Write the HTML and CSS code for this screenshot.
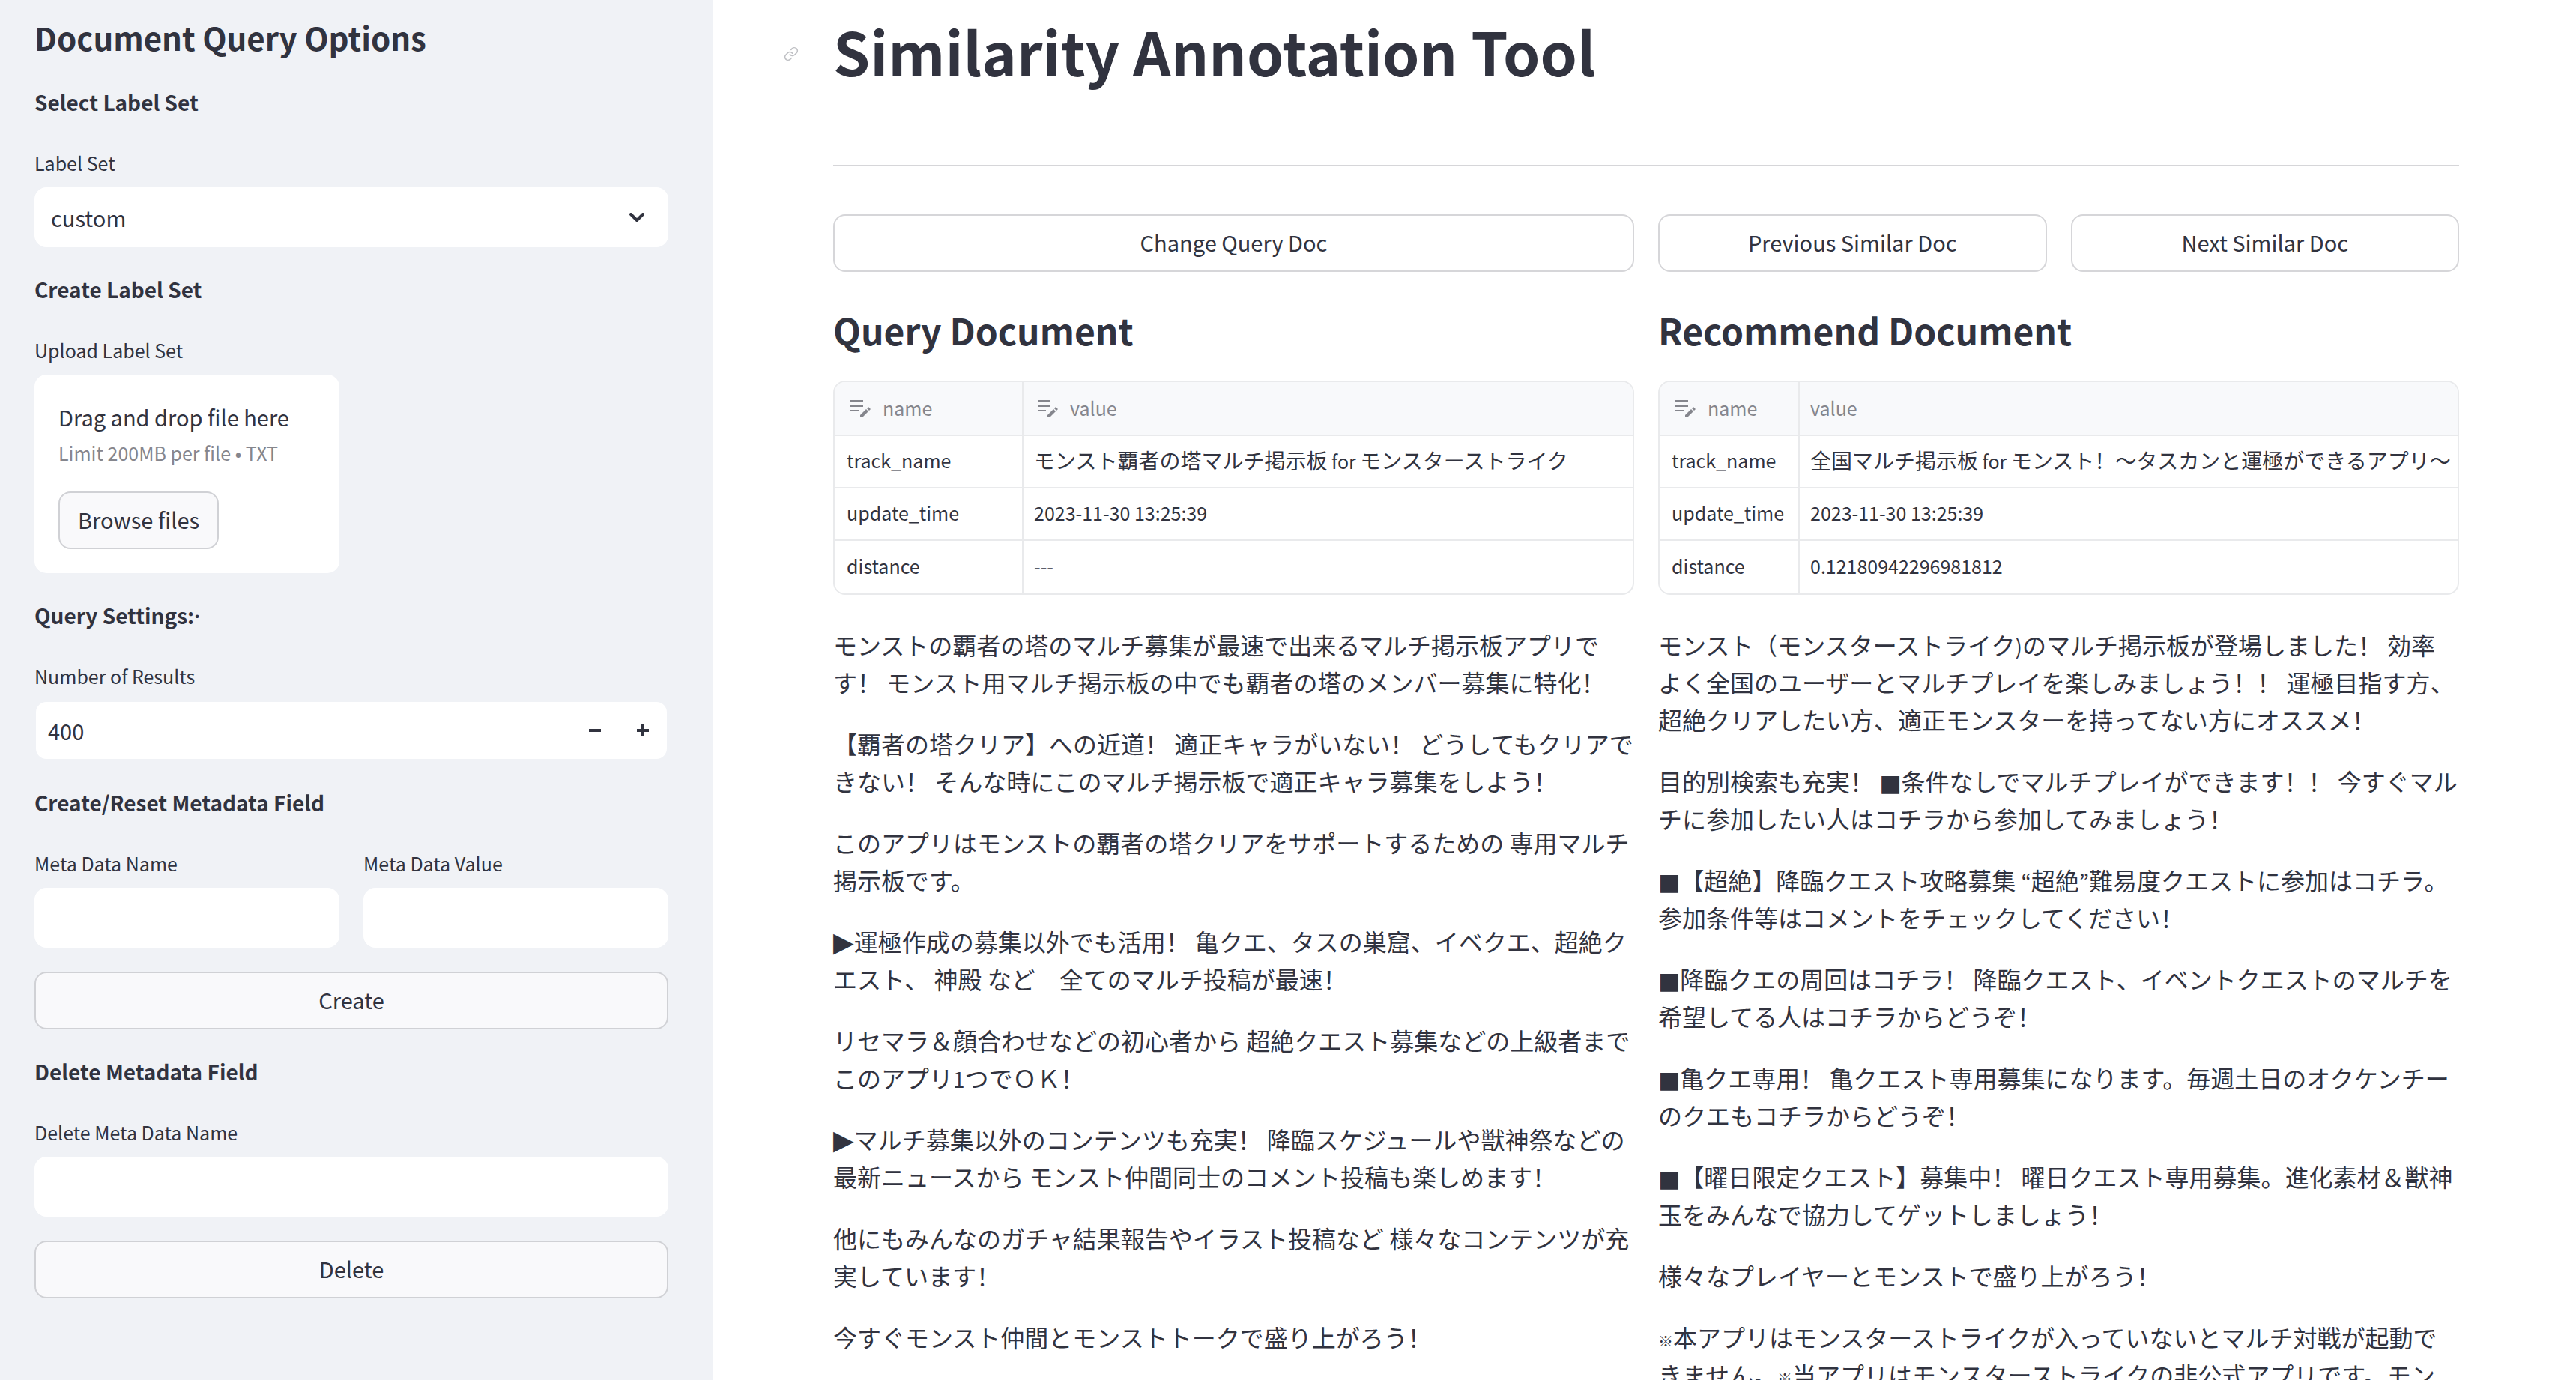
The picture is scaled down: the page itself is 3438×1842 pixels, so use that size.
FILE: index.html
```html
<!DOCTYPE html>
<html lang="en">
<head>
<meta charset="utf-8">
<title>Similarity Annotation Tool</title>
<link rel="stylesheet" href="styles.css">
</head>
<body>
<svg class="defs" aria-hidden="true">
  <symbol id="edit-lines" viewBox="0 0 28 28">
    <path d="M1 5h17M1 12h17M1 18h11" stroke="currentColor" stroke-width="2" fill="none"/>
    <path d="M14 27v-3l8-8 3 3-8 8zM23 15l2-2 3 3-2 2z" fill="currentColor"/>
  </symbol>
</svg>
<div class="app">
  <aside class="sidebar">
    <h2 class="sidebar-title">Document Query Options</h2>

    <section class="group">
      <h3 class="group-title">Select Label Set</h3>
      <label class="label" for="label-set">Label Set</label>
      <div class="select-wrap">
        <select class="field select" id="label-set"><option>custom</option></select>
        <svg class="chevron" viewBox="0 0 20 14" aria-hidden="true"><path d="M2 2l8 8 8-8" fill="none" stroke="currentColor" stroke-width="4" stroke-linecap="round" stroke-linejoin="round"/></svg>
      </div>
    </section>

    <section class="group">
      <h3 class="group-title">Create Label Set</h3>
      <div class="label" id="upload-label">Upload Label Set</div>
      <div class="columns">
        <div class="uploader" role="group" aria-labelledby="upload-label">
          <p class="uploader-text">Drag and drop file here</p>
          <p class="uploader-hint">Limit 200MB per file • TXT</p>
          <button class="button button-small" type="button">Browse files</button>
        </div>
      </div>
    </section>

    <section class="group">
      <h3 class="group-title">Query Settings:<span class="dot">·</span></h3>
      <label class="label" for="results">Number of Results</label>
      <div class="number">
        <input class="number-input" id="results" type="text" inputmode="numeric" value="400">
        <button class="step" type="button" aria-label="Decrease"><svg viewBox="0 0 16 16"><path d="M0 8h16" stroke="currentColor" stroke-width="4"/></svg></button>
        <button class="step" type="button" aria-label="Increase"><svg viewBox="0 0 16 16"><path d="M0 8h16M8 0v16" stroke="currentColor" stroke-width="4"/></svg></button>
      </div>
    </section>

    <section class="group">
      <h3 class="group-title">Create/Reset Metadata Field</h3>
      <div class="columns">
        <div>
          <label class="label" for="meta-name">Meta Data Name</label>
          <input class="field" id="meta-name" type="text">
        </div>
        <div>
          <label class="label" for="meta-value">Meta Data Value</label>
          <input class="field" id="meta-value" type="text">
        </div>
      </div>
      <button class="button below" type="button">Create</button>
    </section>

    <section class="group">
      <h3 class="group-title">Delete Metadata Field</h3>
      <label class="label" for="delete-name">Delete Meta Data Name</label>
      <input class="field" id="delete-name" type="text">
      <button class="button below" type="button">Delete</button>
    </section>
  </aside>

  <main class="main">
    <header class="page-header">
      <h1 class="page-title"><a class="anchor" href="#top" aria-label="Link to this heading"><svg viewBox="0 0 24 24" fill="none" stroke="currentColor" stroke-width="2" stroke-linecap="round" stroke-linejoin="round"><path d="M10 13a5 5 0 0 0 7.540.540l3-3a5 5 0 0 0-7.070-7.070l-1.720 1.710"/><path d="M14 11a5 5 0 0 0-7.540-.540l-3 3a5 5 0 0 0 7.070 7.070l1.710-1.710"/></svg></a>Similarity Annotation Tool</h1>
    </header>
    <hr class="divider">
    <div class="columns actions">
      <button class="button button-plain" type="button">Change Query Doc</button>
      <div class="columns">
        <button class="button button-plain" type="button">Previous Similar Doc</button>
        <button class="button button-plain" type="button">Next Similar Doc</button>
      </div>
    </div>
    <div class="columns">
      <article>
        <h2 class="doc-title">Query Document</h2>
        <div class="table-frame">
          <table class="table">
            <colgroup><col class="col-wide"><col></colgroup>
            <thead><tr>
              <th><span class="head"><svg class="head-icon"><use href="#edit-lines"/></svg>name</span></th>
              <th><span class="head"><svg class="head-icon"><use href="#edit-lines"/></svg>value</span></th>
            </tr></thead>
            <tbody>
              <tr><td>track_name</td><td><span class="cjk">モンスト覇者の塔マルチ掲示板</span> for <span class="cjk">モンスターストライク</span></td></tr>
              <tr><td>update_time</td><td>2023-11-30 13:25:39</td></tr>
              <tr><td>distance</td><td>---</td></tr>
            </tbody>
          </table>
        </div>
        <div class="prose">
          <p>モンストの覇者の塔のマルチ募集が最速で出来るマルチ掲示板アプリです！ モンスト用マルチ掲示板の中でも覇者の塔のメンバー募集に特化！</p>
          <p>【覇者の塔クリア】への近道！ 適正キャラがいない！ どうしてもクリアできない！ そんな時にこのマルチ掲示板で適正キャラ募集をしよう！</p>
          <p>このアプリはモンストの覇者の塔クリアをサポートするための 専用マルチ掲示板です。</p>
          <p><span class="arrow">▶</span>運極作成の募集以外でも活用！ 亀クエ、タスの巣窟、イベクエ、超絶クエスト、 神殿 など　全てのマルチ投稿が最速！</p>
          <p>リセマラ＆顔合わせなどの初心者から 超絶クエスト募集などの上級者までこのアプリ<span class="latin">1</span>つでＯＫ！</p>
          <p><span class="arrow">▶</span>マルチ募集以外のコンテンツも充実！ 降臨スケジュールや獣神祭などの最新ニュースから モンスト仲間同士のコメント投稿も楽しめます！</p>
          <p>他にもみんなのガチャ結果報告やイラスト投稿など 様々なコンテンツが充実しています！</p>
          <p>今すぐモンスト仲間とモンストトークで盛り上がろう！</p>
        </div>
      </article>
      <article>
        <h2 class="doc-title">Recommend Document</h2>
        <div class="table-frame">
          <table class="table">
            <colgroup><col class="col-narrow"><col></colgroup>
            <thead><tr>
              <th><span class="head"><svg class="head-icon"><use href="#edit-lines"/></svg>name</span></th>
              <th><span class="head">value</span></th>
            </tr></thead>
            <tbody>
              <tr><td>track_name</td><td><span class="cjk">全国マルチ掲示板</span> for <span class="cjk">モンスト！～タスカンと運極ができるアプリ～</span></td></tr>
              <tr><td>update_time</td><td>2023-11-30 13:25:39</td></tr>
              <tr><td>distance</td><td>0.12180942296981812</td></tr>
            </tbody>
          </table>
        </div>
        <div class="prose">
          <p>モンスト（モンスターストライク<span class="latin">)</span>のマルチ掲示板が登場しました！ 効率よく全国のユーザーとマルチプレイを楽しみましょう！！ 運極目指す方、超絶クリアしたい方、適正モンスターを持ってない方にオススメ！</p>
          <p>目的別検索も充実！ <span class="square">■</span>条件なしでマルチプレイができます！！ 今すぐマルチに参加したい人はコチラから参加してみましょう！</p>
          <p><span class="square">■</span>【超絶】降臨クエスト攻略募集 <span class="latin">“</span>超絶<span class="latin">”</span>難易度クエストに参加はコチラ。参加条件等はコメントをチェックしてください！</p>
          <p><span class="square">■</span>降臨クエの周回はコチラ！ 降臨クエスト、イベントクエストのマルチを希望してる人はコチラからどうぞ！</p>
          <p><span class="square">■</span>亀クエ専用！ 亀クエスト専用募集になります。毎週土日のオクケンチーのクエもコチラからどうぞ！</p>
          <p><span class="square">■</span>【曜日限定クエスト】募集中！ 曜日クエスト専用募集。進化素材＆獣神玉をみんなで協力してゲットしましょう！</p>
          <p>様々なプレイヤーとモンストで盛り上がろう！</p>
          <p><span class="note">※</span>本アプリはモンスターストライクが入っていないとマルチ対戦が起動できません。<span class="note">※</span>当アプリはモンスターストライクの非公式アプリです。モン</p>
        </div>
      </article>
    </div>
  </main>
</div>
</body>
</html>
```
FILE: styles.css
```css
* { box-sizing: border-box; }

body {
  margin: 0;
  color: #31333f;
  background: #fff;
  font-family: "Noto Sans CJK SC", "Noto Sans CJK JP", sans-serif;
  font-size: 29px;
  line-height: 48px;
}

h1, h2, h3, p { margin: 0; }
h1, h2, h3 { font-weight: 600; }

button, input, select { font: inherit; color: inherit; }

.defs { display: none; }

.app {
  display: flex;
  height: 100vh;
  overflow: hidden;
}

/* Sidebar */
.sidebar {
  flex: 0 0 952px;
  padding: 20px 60px 0 46px;
  background: #f0f2f6;
}

.sidebar-title { font-size: 42px; line-height: 60px; }

.group { margin-top: 32px; }

.group-title {
  margin-bottom: 36px;
  font-size: 28px;
  line-height: 48px;
}

.dot { font-family: "Noto Sans", sans-serif; line-height: 1; }

.label {
  display: block;
  margin-bottom: 12px;
  font-size: 25px;
  line-height: 42px;
}

.columns {
  display: grid;
  grid-template-columns: 1fr 1fr;
  gap: 32px;
}

.columns > * { min-width: 0; }

.field {
  display: block;
  width: 100%;
  height: 80px;
  padding: 0 22px;
  border: 0;
  border-radius: 16px;
  background: #fff;
}

.select-wrap { position: relative; }

.select { appearance: none; }

.chevron {
  position: absolute;
  top: 34px;
  right: 32px;
  width: 20px;
  height: 14px;
  pointer-events: none;
}

.uploader {
  padding: 32px;
  border-radius: 16px;
  background: #fff;
}

.uploader-hint {
  margin-bottom: 28px;
  color: #85868d;
  font-family: "Noto Sans CJK KR", sans-serif;
  font-size: 25px;
}

.button {
  display: block;
  width: 100%;
  height: 77px;
  padding: 0 24px 4px;
  border: 2px solid #d0d1d5;
  border-radius: 16px;
  background: #f9f9fb;
}

.button-small { width: auto; }
.button-plain { background: #fff; border-color: #d6d6d9; }
.below { margin-top: 32px; }

.number {
  display: flex;
  height: 80px;
  border: 2px solid #f0f2f6;
  border-radius: 16px;
  background: #fff;
}

.number-input {
  flex: 1;
  min-width: 0;
  padding: 0 16px;
  border: 0;
  background: none;
}

.step {
  display: grid;
  place-items: center;
  width: 64px;
  padding: 0;
  border: 0;
  background: none;
}

.step svg { width: 16px; height: 16px; }

/* Main */
.main {
  flex: 1;
  min-width: 0;
  padding: 12px 156px 0 160px;
}

.page-title {
  position: relative;
  font-size: 79px;
  font-weight: 700;
  line-height: 112px;
}

.anchor {
  position: absolute;
  top: 50%;
  left: -66px;
  display: block;
  width: 20px;
  height: 20px;
  margin-top: -6px;
  color: #bfc0c4;
}

.anchor svg { display: block; }

.divider {
  height: 2px;
  margin: 96px 0 64px;
  border: 0;
  background: #d6d6d9;
}

.actions { margin-bottom: 41px; }

.doc-title {
  margin-bottom: 32px;
  font-size: 48px;
  line-height: 72px;
}

.table-frame {
  overflow: hidden;
  border: 2px solid #e9eaec;
  border-radius: 16px;
}

.table {
  width: 100%;
  border-collapse: separate;
  border-spacing: 0;
  table-layout: fixed;
  font-size: 25px;
  line-height: 40px;
  white-space: nowrap;
}

.col-wide { width: 252px; }
.col-narrow { width: 187px; }

.table th, .table td {
  height: 70px;
  padding: 0 0 4px 16px;
  border-bottom: 2px solid #e9eaec;
  text-align: left;
}

.table th {
  height: 72px;
  padding-bottom: 2px;
  background: #f8f9fb;
  color: #85868d;
  font-weight: 400;
}

.table th:first-child, .table td:first-child { border-right: 2px solid #e9eaec; }
.table th + th, .table td + td { padding-left: 14px; }
.table tr:last-child td { border-bottom: 0; }

.head { display: flex; align-items: center; }

.head-icon {
  width: 28px;
  height: 28px;
  margin: 0 16px 0 4px;
}

.cjk { font-size: 28px; }

.prose {
  margin-top: 41px;
  font-size: 32px;
  line-height: 50px;
}

.prose p { margin-bottom: 32px; }

.prose span { line-height: 1; }

.latin { font-family: "Noto Sans CJK KR", sans-serif; font-size: 28px; }
.arrow { font-family: "DejaVu Sans", sans-serif; font-size: 36px; }
.square { font-family: "DejaVu Sans", sans-serif; font-size: 31px; }
.note { font-size: 20px; font-weight: 700; }
```
